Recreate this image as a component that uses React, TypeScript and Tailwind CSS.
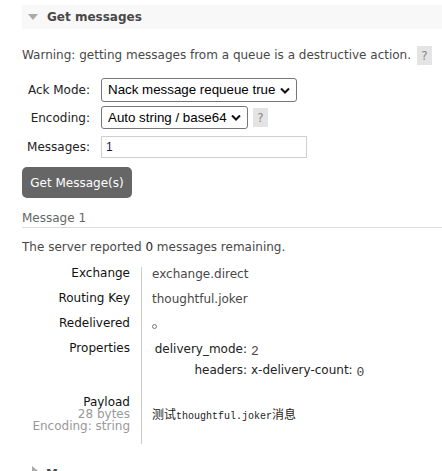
import React from "react";

const body = "font-['DejaVu_Sans',sans-serif]";
const arial = "font-['Liberation_Sans',Arial,sans-serif]";

function Chevron() {
  return (
    <svg width="10" height="7" viewBox="0 0 10 7" className="shrink-0">
      <path d="M1 1.5 L5 5.5 L9 1.5" fill="none" stroke="#111" strokeWidth="2" />
    </svg>
  );
}

function Help({ className = "" }: { className?: string }) {
  return (
    <span
      className={`flex w-[15px] h-[19px] items-center justify-center bg-[#e4e4e4] text-[#888] text-[12px] ${className}`}
    >
      ?
    </span>
  );
}

export default function App() {
  return (
    <div
      className={`${body} w-[442px] h-[471px] overflow-hidden bg-white text-[12px] text-[#484848] pl-[22px] pt-[5px]`}
    >
      {/* Section header */}
      <div className="flex h-[24px] items-center bg-[#f8f8f8] pl-[6px] gap-[9px]">
        <svg width="10" height="6" viewBox="0 0 10 6">
          <path d="M0 0 L10 0 L5 6 Z" fill="#aaa" />
        </svg>
        <span className="font-bold text-[12px] text-[#484848]">Get messages</span>
      </div>

      {/* Warning */}
      <div className="mt-[17px] flex items-center h-[19px]">
        <span className="leading-[19px]">
          Warning: getting messages from a queue is a destructive action.
        </span>
        <Help className="ml-[6px]" />
      </div>

      {/* Form */}
      <div className="mt-[13px] grid grid-cols-[68px_auto] gap-x-[11px] items-center">
        <span className="text-right text-[#222]">Ack Mode:</span>
        <div
          className={`${arial} flex h-[24px] w-[196px] items-center justify-between rounded-[3px] border border-[#767676] pl-[6px] pr-[6px] text-[13.33px] text-black`}
        >
          <span>Nack message requeue true</span>
          <Chevron />
        </div>

        <span className="mt-[4px] text-right text-[#222]">Encoding:</span>
        <div className="mt-[4px] flex items-center">
          <div
            className={`${arial} flex h-[23px] w-[147px] items-center justify-between rounded-[3px] border border-[#767676] pl-[6px] pr-[6px] text-[13.33px] text-black`}
          >
            <span>Auto string / base64</span>
            <Chevron />
          </div>
          <Help className="ml-[5px]" />
        </div>

        <span className="mt-[7px] text-right text-[#222]">Messages:</span>
        <div
          className={`${arial} mt-[7px] flex h-[22px] w-[206px] items-center border border-[#cfcfcf] pl-[4px] text-[12px] text-[#1a1a4a]`}
        >
          1
        </div>
      </div>

      {/* Button */}
      <button className="mt-[9px] flex h-[31px] w-[110px] items-center justify-center rounded-[5px] bg-[#666] text-[12px] text-white">
        Get Message(s)
      </button>

      {/* Message 1 */}
      <div className="mt-[11px] border-b border-[#ddd] leading-[18px] text-[#666]">
        Message 1
      </div>

      <div className="mt-[10px] leading-[18px]">
        The server reported <span className="text-[#222]">0</span> messages remaining.
      </div>

      {/* Message table */}
      <div className="mt-[11px] grid grid-cols-[119px_auto]">
        <div className="h-[25px] pr-[11px] text-right leading-[12px] text-[#111]">Exchange</div>
        <div className="h-[25px] border-l border-[#ccc] pl-[10px] leading-[14px]">exchange.direct</div>

        <div className="h-[25px] pr-[11px] text-right leading-[12px] text-[#111]">Routing Key</div>
        <div className="h-[25px] border-l border-[#ccc] pl-[10px] leading-[14px]">thoughtful.joker</div>

        <div className="h-[25px] pr-[11px] text-right leading-[12px] text-[#111]">Redelivered</div>
        <div className="h-[25px] border-l border-[#ccc] pl-[10px] pt-[7px]">
          <div className="h-[5px] w-[5px] rounded-full border border-[#777]" />
        </div>

        <div className="h-[54px] pr-[11px] text-right leading-[12px] text-[#111]">Properties</div>
        <div className="h-[54px] border-l border-[#ccc] pl-[11px]">
          <div className="grid grid-cols-[94px_auto] gap-x-[4px] leading-[14px] text-[#222]">
            <span className="text-right">delivery_mode:</span>
            <span className="font-['Liberation_Mono',monospace] text-[13px] text-[#484848] leading-[20px]">2</span>
            <span className="mt-[1px] text-right">headers:</span>
            <span className="mt-[1px]">
              x-delivery-count:{" "}
              <span className="font-['Liberation_Mono',monospace] text-[13px] text-[#484848] align-[-2px]">0</span>
            </span>
          </div>
        </div>

        <div className="h-[48px] pr-[11px] text-right leading-[12px]">
          <div className="text-[#111]">Payload</div>
          <div className="text-[#999]">28 bytes</div>
          <div className="text-[#999]">Encoding: string</div>
        </div>
        <div className="h-[48px] border-l border-[#ccc] pl-[10px] pt-[11px] leading-[14px] text-[#222]">
          <span className="font-['Noto_Sans_CJK_SC',sans-serif] text-[12px]">测试</span>
          <span className="font-['Liberation_Mono',monospace] text-[10px]">thoughtful.joker</span>
          <span className="font-['Noto_Sans_CJK_SC',sans-serif] text-[12px]">消息</span>
        </div>
      </div>

      {/* Next section (cut off) */}
      <div className="mt-[21px] flex items-start pl-[10px] gap-[8px]">
        <svg width="6" height="10" viewBox="0 0 6 10" className="mt-[1px]">
          <path d="M0 0 L6 5 L0 10 Z" fill="#aaa" />
        </svg>
        <span className="font-bold text-[#484848]">Move messages</span>
      </div>
    </div>
  );
}
